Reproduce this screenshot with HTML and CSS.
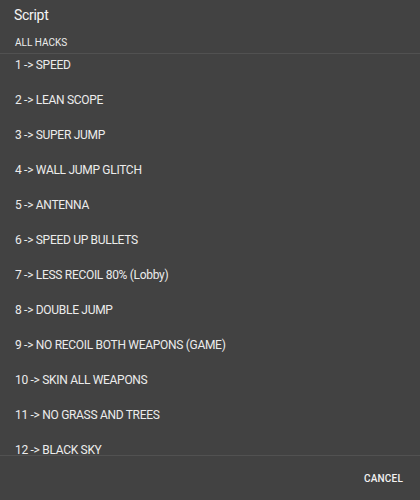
FILE: index.html
```html
<!DOCTYPE html>
<html>
<head>
<meta charset="utf-8">
<link rel="stylesheet" href="styles.css">
</head>
<body>
<div class="dialog">
  <div class="title">Script</div>
  <div class="subtitle">ALL HACKS</div>
  <div class="divider"></div>
  <ul class="list">
    <li>1 -&gt; SPEED</li>
    <li>2 -&gt; LEAN SCOPE</li>
    <li>3 -&gt; SUPER JUMP</li>
    <li>4 -&gt; WALL JUMP GLITCH</li>
    <li>5 -&gt; ANTENNA</li>
    <li>6 -&gt; SPEED UP BULLETS</li>
    <li>7 -&gt; LESS RECOIL 80% (Lobby)</li>
    <li>8 -&gt; DOUBLE JUMP</li>
    <li>9 -&gt; NO RECOIL BOTH WEAPONS (GAME)</li>
    <li>10 -&gt; SKIN ALL WEAPONS</li>
    <li>11 -&gt; NO GRASS AND TREES</li>
    <li>12 -&gt; BLACK SKY</li>
  </ul>
  <div class="divider"></div>
  <div class="actions">
    <span class="btn">CANCEL</span>
  </div>
</div>
</body>
</html>
```
FILE: styles.css
```css
html, body {
  margin: 0;
  padding: 0;
  background: #424242;
}
body {
  font-family: Roboto, "Liberation Sans", sans-serif;
  color: #f2f2f2;
}
.dialog {
  width: 420px;
  height: 500px;
  display: flex;
  flex-direction: column;
  overflow: hidden;
}
.title {
  height: 29px;
  line-height: 30px;
  padding-left: 14px;
  font-size: 14px;
  letter-spacing: -0.3px;
  color: #f5f5f5;
}
.subtitle {
  height: 24px;
  line-height: 28px;
  padding-left: 15px;
  font-size: 10px;
  color: #ececec;
}
.divider {
  height: 1px;
  background: #515151;
  flex: none;
}
.list {
  list-style: none;
  margin: 0;
  padding: 4px 0 0 0;
  height: 401px;
  box-sizing: border-box;
  flex: none;
  display: flex;
  flex-direction: column;
  gap: 21px;
}
.list li {
  height: 14px;
  line-height: 14px;
  padding-left: 15px;
  font-size: 12px;
  letter-spacing: -0.3px;
  color: #ececec;
  white-space: nowrap;
  flex: none;
}
.actions {
  flex: 1;
  display: flex;
  justify-content: flex-end;
  align-items: center;
  padding-right: 17px;
}
.btn {
  font-size: 10px;
  font-weight: 500;
  color: #f2f2f2;
  letter-spacing: 0.2px;
}
```
